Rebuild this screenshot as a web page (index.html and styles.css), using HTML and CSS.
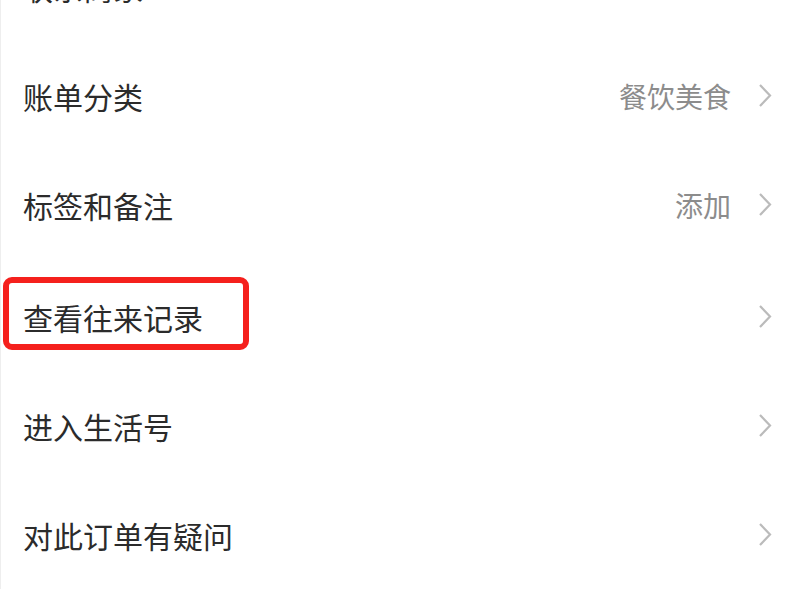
FILE: index.html
```html
<!DOCTYPE html>
<html lang="zh-CN">
<head>
    <meta charset="UTF-8">
    <meta name="viewport" content="width=device-width, initial-scale=1.0">
    <title>账单详情</title>
    <link rel="stylesheet" href="styles.css">
</head>
<body>
    <div class="list">
        <div class="row">
            <span class="label">联系商家</span>
            <svg class="arrow" width="14" height="25" viewBox="0 0 14 25"><path d="M2 2 L12 12.5 L2 23"/></svg>
        </div>
        <div class="row">
            <span class="label">账单分类</span>
            <span class="value">餐饮美食</span>
            <svg class="arrow" width="14" height="25" viewBox="0 0 14 25"><path d="M2 2 L12 12.5 L2 23"/></svg>
        </div>
        <div class="row">
            <span class="label">标签和备注</span>
            <span class="value">添加</span>
            <svg class="arrow" width="14" height="25" viewBox="0 0 14 25"><path d="M2 2 L12 12.5 L2 23"/></svg>
        </div>
        <div class="row marked">
            <span class="label">查看往来记录</span>
            <div class="mark"></div>
            <svg class="arrow" width="14" height="25" viewBox="0 0 14 25"><path d="M2 2 L12 12.5 L2 23"/></svg>
        </div>
        <div class="row">
            <span class="label">进入生活号</span>
            <svg class="arrow" width="14" height="25" viewBox="0 0 14 25"><path d="M2 2 L12 12.5 L2 23"/></svg>
        </div>
        <div class="row">
            <span class="label">对此订单有疑问</span>
            <svg class="arrow" width="14" height="25" viewBox="0 0 14 25"><path d="M2 2 L12 12.5 L2 23"/></svg>
        </div>
    </div>
</body>
</html>
```

FILE: styles.css
```css
body {
    margin: 0;
    padding: 0;
    background: #fff;
    color: #333;
    font-family: "Noto Sans CJK SC", "Noto Sans", sans-serif;
    overflow: hidden;
}
.list {
    margin-top: -68px;
    border-left: 1px solid #eee;
}
.row {
    position: relative;
    display: flex;
    align-items: center;
    height: 109px;
    padding: 0 28px 0 22px;
}
.marked {
    margin-top: 3px;
}
.label {
    flex: 1;
    font-size: 30px;
    color: #2b2b2b;
}
.value {
    font-size: 28px;
    color: #8c8c8c;
    margin-right: 27px;
}
.arrow {
    flex-shrink: 0;
}
.arrow path {
    fill: none;
    stroke: #bbb;
    stroke-width: 2.2;
}
.mark {
    position: absolute;
    left: 2px;
    top: 15px;
    width: 234px;
    height: 61px;
    border: 6px solid #f5201d;
    border-radius: 9px;
}
```
